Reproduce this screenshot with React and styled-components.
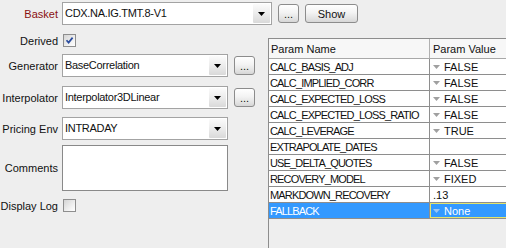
import React from "react";
import styled, { createGlobalStyle } from "styled-components";

const GlobalStyle = createGlobalStyle`
  html, body {
    margin: 0;
    padding: 0;
    width: 506px;
    height: 248px;
    overflow: hidden;
    background: #eeeeee;
  }
  body {
    font-family: "Liberation Sans", Arial, sans-serif;
    font-size: 11px;
    color: #111;
  }
`;

const Page = styled.div`
  display: flex;
  flex-direction: column;
  height: 248px;
`;

const TopRow = styled.div`
  display: flex;
  align-items: center;
  height: 23px;
  margin-top: 2px;
`;

const Body = styled.div`
  display: flex;
  flex: 1;
  min-height: 0;
`;

const LeftCol = styled.div`
  width: 268px;
  flex: none;
  display: flex;
  flex-direction: column;
`;

const FormRow = styled.div`
  display: flex;
  align-items: center;
  height: ${(p) => p.$h}px;
  margin-top: ${(p) => p.$mt}px;
`;

const Label = styled.div`
  width: 58px;
  flex: none;
  text-align: right;
  white-space: nowrap;
  color: ${(p) => (p.$accent ? "#8a1010" : "#111")};
`;

const Combo = styled.div`
  width: ${(p) => p.$w}px;
  height: 23px;
  box-sizing: border-box;
  margin-left: 4px;
  border: 1px solid #a3a3a3;
  background: #fff;
  padding: 1px;
  display: flex;
  flex: none;
`;

const ComboText = styled.div`
  flex: 1;
  padding-left: 1px;
  line-height: 19px;
  white-space: nowrap;
  overflow: hidden;
  letter-spacing: -0.3px;
`;

const ComboArrow = styled.div`
  width: 17px;
  flex: none;
  display: flex;
  align-items: center;
  justify-content: center;
  background: linear-gradient(#fbfbfb, #ececec 50%, #d9d9d9);
  border-radius: 1px;
`;

const Btn = styled.button`
  width: ${(p) => p.$w}px;
  height: 19px;
  margin-left: ${(p) => p.$ml}px;
  padding: 0;
  box-sizing: border-box;
  border: 1px solid #8c8c8c;
  border-radius: 3px;
  background: linear-gradient(#ffffff, #f3f3f3 45%, #e2e2e2 80%, #d6d6d6);
  font-family: "Liberation Sans", Arial, sans-serif;
  font-size: 11px;
  color: #111;
  flex: none;
  line-height: 16px;
`;

const CheckBox = styled.div`
  width: 13px;
  height: 13px;
  box-sizing: border-box;
  margin-left: 5px;
  border: 1px solid #8e8e8e;
  background: linear-gradient(135deg, #d4d4d4, #f4f4f4 70%, #ffffff);
  display: flex;
  align-items: center;
  justify-content: center;
`;

const TextArea = styled.div`
  width: 166px;
  height: 46px;
  box-sizing: border-box;
  margin-left: 4px;
  border: 1px solid #898989;
  background: #fff;
`;

const TablePane = styled.div`
  flex: 1;
  min-width: 0;
  margin-top: 13px;
  border-left: 1px solid #8d8d8d;
  border-top: 1px solid #8d8d8d;
  overflow: hidden;
  background: #eeeeee;
`;

const Row = styled.div`
  display: flex;
  height: ${(p) => (p.$header ? 20 : 16)}px;
  box-sizing: border-box;
  border-bottom: 1px solid ${(p) => (p.$header ? "#a8a8a8" : "#8e8e8e")};
  background: ${(p) => (p.$header ? "#f7f7f7" : "#fff")};
  width: 260px;
`;

const NameCell = styled.div`
  width: 161px;
  flex: none;
  box-sizing: border-box;
  border-right: 1px solid ${(p) => (p.$header ? "#b0b0b0" : "#8e8e8e")};
  padding-left: ${(p) => (p.$header ? 2 : 1)}px;
  display: flex;
  align-items: center;
  white-space: nowrap;
  overflow: hidden;
  letter-spacing: ${(p) => (p.$header ? "0" : "-0.85px")};
  background: ${(p) => (p.$selected ? "#3399ff" : "transparent")};
  color: ${(p) => (p.$selected ? "#fff" : "#111")};
`;

const ValueCell = styled.div`
  flex: 1;
  box-sizing: border-box;
  display: flex;
  align-items: center;
  padding-left: ${(p) => (p.$header ? 3 : 3)}px;
  white-space: nowrap;
  background: ${(p) => (p.$selected ? "#3399ff" : "transparent")};
  color: ${(p) => (p.$selected ? "#fff" : "#111")};
  box-shadow: ${(p) => (p.$selected ? "inset 0 0 0 1px #e4e46c" : "none")};
`;

const ValueText = styled.span`
  margin-left: ${(p) => (p.$hasArrow ? 4 : 0)}px;
`;

const DropArrow = ({ color = "#000", w = 7, h = 4 }) => (
  <svg width={w} height={h} viewBox={`0 0 ${w} ${h}`}>
    <polygon points={`0,0 ${w},0 ${w / 2},${h}`} fill={color} />
  </svg>
);

const ComboBox = ({ w, text }) => (
  <Combo $w={w}>
    <ComboText>{text}</ComboText>
    <ComboArrow>
      <DropArrow />
    </ComboArrow>
  </Combo>
);

const Check = ({ checked }) => (
  <CheckBox>
    {checked && (
      <svg width="9" height="9" viewBox="0 0 9 9">
        <path d="M1.5 4.2 L3.6 6.6 L7.6 1.6" stroke="#2a4c9e" strokeWidth="1.7" fill="none" />
      </svg>
    )}
  </CheckBox>
);

const params = [
  { name: "CALC_BASIS_ADJ", value: "FALSE", arrow: true },
  { name: "CALC_IMPLIED_CORR", value: "FALSE", arrow: true },
  { name: "CALC_EXPECTED_LOSS", value: "FALSE", arrow: true },
  { name: "CALC_EXPECTED_LOSS_RATIO", value: "FALSE", arrow: true },
  { name: "CALC_LEVERAGE", value: "TRUE", arrow: true },
  { name: "EXTRAPOLATE_DATES", value: "", arrow: false },
  { name: "USE_DELTA_QUOTES", value: "FALSE", arrow: true },
  { name: "RECOVERY_MODEL", value: "FIXED", arrow: true },
  { name: "MARKDOWN_RECOVERY", value: ".13", arrow: false },
  { name: "FALLBACK", value: "None", arrow: true, selected: true },
];

export default function App() {
  return (
    <Page>
      <GlobalStyle />
      <TopRow>
        <Label $accent>Basket</Label>
        <ComboBox w={210} text="CDX.NA.IG.TMT.8-V1" />
        <Btn $w={21} $ml={6}>...</Btn>
        <Btn $w={53} $ml={6}>Show</Btn>
      </TopRow>
      <Body>
        <LeftCol>
          <FormRow $h={13} $mt={9}>
            <Label>Derived</Label>
            <Check checked />
          </FormRow>
          <FormRow $h={23} $mt={7}>
            <Label>Generator</Label>
            <ComboBox w={166} text="BaseCorrelation" />
            <Btn $w={21} $ml={6}>...</Btn>
          </FormRow>
          <FormRow $h={23} $mt={9}>
            <Label>Interpolator</Label>
            <ComboBox w={166} text="Interpolator3DLinear" />
            <Btn $w={21} $ml={6}>...</Btn>
          </FormRow>
          <FormRow $h={23} $mt={8}>
            <Label>Pricing Env</Label>
            <ComboBox w={166} text="INTRADAY" />
          </FormRow>
          <FormRow $h={46} $mt={5}>
            <Label>Comments</Label>
            <TextArea />
          </FormRow>
          <FormRow $h={13} $mt={8}>
            <Label>Display Log</Label>
            <Check />
          </FormRow>
        </LeftCol>
        <TablePane>
          <Row $header>
            <NameCell $header>Param Name</NameCell>
            <ValueCell $header>Param Value</ValueCell>
          </Row>
          {params.map((p) => (
            <Row key={p.name}>
              <NameCell $selected={p.selected}>{p.name}</NameCell>
              <ValueCell $selected={p.selected}>
                {p.arrow && <DropArrow color={p.selected ? "#9cc6f2" : "#a0a0a0"} />}
                <ValueText $hasArrow={p.arrow}>{p.value}</ValueText>
              </ValueCell>
            </Row>
          ))}
        </TablePane>
      </Body>
    </Page>
  );
}
